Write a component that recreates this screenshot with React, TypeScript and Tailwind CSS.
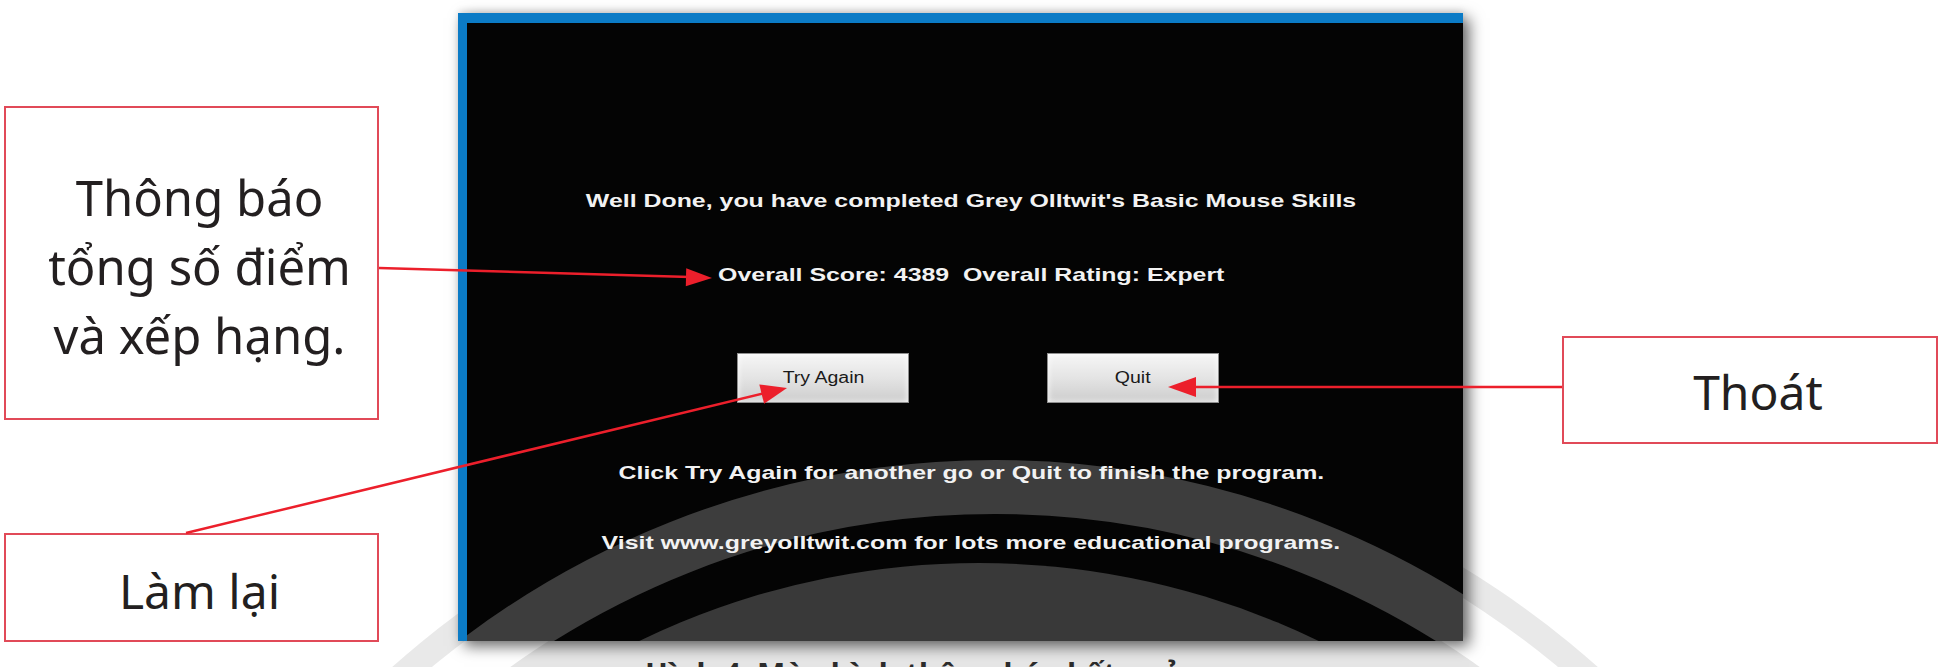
import React from "react";

const dlgFont = { fontFamily: '"Liberation Sans", Arial, sans-serif' };
const noteFont = { fontFamily: '"Noto Sans", "Open Sans", sans-serif' };

function DlgLine({ children }: { children: React.ReactNode }) {
  return (
    <div className="h-[24px] leading-[24px] text-[19px] font-bold text-[#f2f2f2] whitespace-nowrap scale-x-[1.31]" style={dlgFont}>
      {children}
    </div>
  );
}

function Btn({ label }: { label: string }) {
  return (
    <div className="w-[172px] h-[50px] flex items-center justify-center border border-[#8f8f8f] bg-gradient-to-b from-[#f6f6f6] via-[#e4e4e4] to-[#cdcdcd] shadow-[inset_0_0_6px_rgba(255,255,255,0.9)]">
      <span className="text-[16px] text-[#1a1a1a] scale-x-[1.22] leading-none" style={dlgFont}>
        {label}
      </span>
    </div>
  );
}

export default function App() {
  return (
    <div className="relative w-[1948px] h-[667px] overflow-hidden bg-white">
      {/* light background decoration below the dialog */}
      <svg className="absolute left-0 top-0" width="1948" height="667">
        <circle cx="995" cy="1342" r="905" fill="#e9e9e9" />
        <circle cx="995" cy="1342" r="879" fill="#ffffff" />
        <circle cx="995" cy="1342" r="831" fill="#e6e6e6" />
      </svg>

      <div className="relative flex items-start">
        {/* left callouts */}
        <div className="ml-[4px] w-[375px] flex flex-col">
          <div className="mt-[106px] h-[314px] border-2 border-[#e14a58] bg-white flex flex-col items-center justify-center pl-[16px] pt-[6px] text-[49px] leading-[69px] text-[#231f20]" style={noteFont}>
            <span>Thông báo</span>
            <span>tổng số điểm</span>
            <span>và xếp hạng.</span>
          </div>
          <div className="mt-[113px] h-[109px] border-2 border-[#e14a58] bg-white flex items-center justify-center pl-[16px] pt-[6px] text-[48px] leading-none text-[#231f20]" style={noteFont}>
            Làm lại
          </div>
        </div>

        {/* dialog */}
        <div className="ml-[79px] mt-[13px] w-[1005px] h-[628px] border-t-[10px] border-l-[9px] border-[#0b7bc6] bg-[#040404] relative overflow-hidden shadow-[6px_5px_14px_rgba(0,0,0,0.6),0_-3px_6px_rgba(0,0,0,0.08)]">
          <svg className="absolute left-0 top-0" width="996" height="618">
            <circle cx="528" cy="1319" r="855" fill="none" stroke="#3d3d3d" strokeWidth="54" />
            <circle cx="512" cy="1319" r="779" fill="#393939" />
          </svg>
          <div className="relative flex flex-col items-center pl-[12px]">
            <div className="mt-[166px]">
              <DlgLine>Well Done, you have completed Grey Olltwit's Basic Mouse Skills</DlgLine>
            </div>
            <div className="mt-[50px]">
              <DlgLine>Overall Score: 4389&nbsp;&nbsp;Overall Rating: Expert</DlgLine>
            </div>
            <div className="mt-[66px] w-full flex gap-[138px] pl-[258px]">
              <Btn label="Try Again" />
              <Btn label="Quit" />
            </div>
            <div className="mt-[58px]">
              <DlgLine>Click Try Again for another go or Quit to finish the program.</DlgLine>
            </div>
            <div className="mt-[46px]">
              <DlgLine>Visit www.greyolltwit.com for lots more educational programs.</DlgLine>
            </div>
          </div>
        </div>

        {/* right callout */}
        <div className="ml-[99px] mt-[336px] w-[376px] h-[108px] border-2 border-[#e14a58] bg-white flex items-center justify-center pl-[16px] pt-[4px] text-[48px] leading-none text-[#231f20]" style={noteFont}>
          Thoát
        </div>
      </div>

      {/* caption, clipped at the bottom edge */}
      <div className="relative mt-[17px] pl-[645px] text-[30px] leading-none font-bold text-[#2b2b2b] whitespace-nowrap" style={noteFont}>
        Hình 4. Màn hình thông báo kết quả
      </div>

      {/* arrows */}
      <svg className="absolute left-0 top-0 pointer-events-none" width="1948" height="667">
        <g stroke="#ec1f2b" strokeWidth="2.5" fill="none">
          <line x1="379" y1="268" x2="690" y2="277" />
          <line x1="186" y1="533" x2="765" y2="393" />
          <line x1="1562" y1="387" x2="1190" y2="387" />
        </g>
        <g fill="#ec1f2b">
          <polygon points="712,278 685.8,286.3 686.2,268.3" />
          <polygon points="787,388 764.1,403.8 759.3,384.4" />
          <polygon points="1168,387 1196,377 1196,397" />
        </g>
      </svg>
    </div>
  );
}
